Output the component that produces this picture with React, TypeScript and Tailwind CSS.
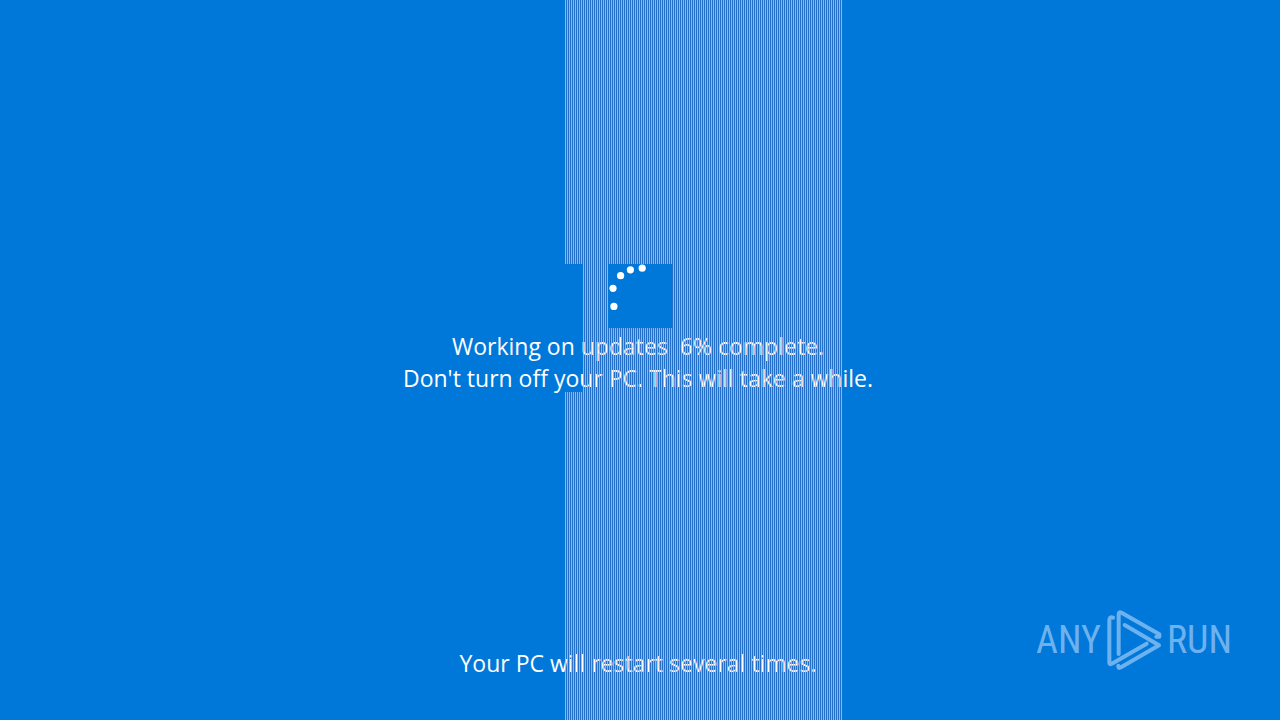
export default function App() {
  return (
    <main className="relative flex min-h-screen flex-col items-center overflow-hidden bg-[#0078da] font-['Open_Sans',sans-serif] text-[23px] leading-8 text-white">
      <div className="absolute inset-y-0 left-1/2 -ml-[75px] w-[277px] bg-[repeating-linear-gradient(90deg,#86b9ef_0px_1px,#246fc8_1px_2px)]" />
      <section className="relative mt-[264px] flex flex-col items-center text-center">
        <div className="absolute top-0 left-1/2 -ml-[75px] h-32 w-[18px] bg-[#0078da]" />
        <svg className="relative z-20 h-16 w-16 bg-[#0078da]" viewBox="0 0 64 64" fill="#fff" role="img" aria-label="Loading">
          <circle cx="34.2" cy="4.2" r="3.6" />
          <circle cx="22.4" cy="5.8" r="3.6" />
          <circle cx="12.6" cy="11.7" r="3.6" />
          <circle cx="5" cy="24.3" r="3.6" />
          <circle cx="5.9" cy="42.4" r="3.6" />
        </svg>
        <div className="relative pt-0.5 pr-1">
          <p>Working on updates&nbsp; 6% complete.</p>
          <p>Don't turn off your PC. This will take a while.</p>
        </div>
        <div className="absolute top-0 left-1/2 z-10 -ml-[57px] h-32 w-[259px] bg-[repeating-linear-gradient(90deg,#86b9efb0_0px_1px,transparent_1px_2px)]" />
      </section>
      <p className="relative mt-auto mb-[41px] pr-1">Your PC will restart several times.</p>
      <div className="absolute bottom-10 left-1/2 -ml-[75px] h-8 w-[277px] bg-[repeating-linear-gradient(90deg,#86b9efb0_0px_1px,transparent_1px_2px)]" />
      <div className="absolute right-12 bottom-11 flex items-center text-[#6db2ee]">
        <span className="font-['Roboto_Condensed',sans-serif] text-[38px]">ANY</span>
        <svg className="h-[72px] w-[66px]" viewBox="0 0 198 216" fill="none" stroke="#6db2ee" strokeWidth="12" strokeLinecap="round" strokeLinejoin="round" aria-hidden="true">
          <path d="M36 41Q25 36 25 49V176Q25 184 35 178L137 119" />
          <path d="M53 150V31Q53 21 63 27L175 91L175 98L166 98" />
          <path d="M71 63L174 124L60 190Q51 195 52 185" />
        </svg>
        <span className="font-['Roboto_Condensed',sans-serif] text-[38px]">RUN</span>
      </div>
    </main>
  );
}
